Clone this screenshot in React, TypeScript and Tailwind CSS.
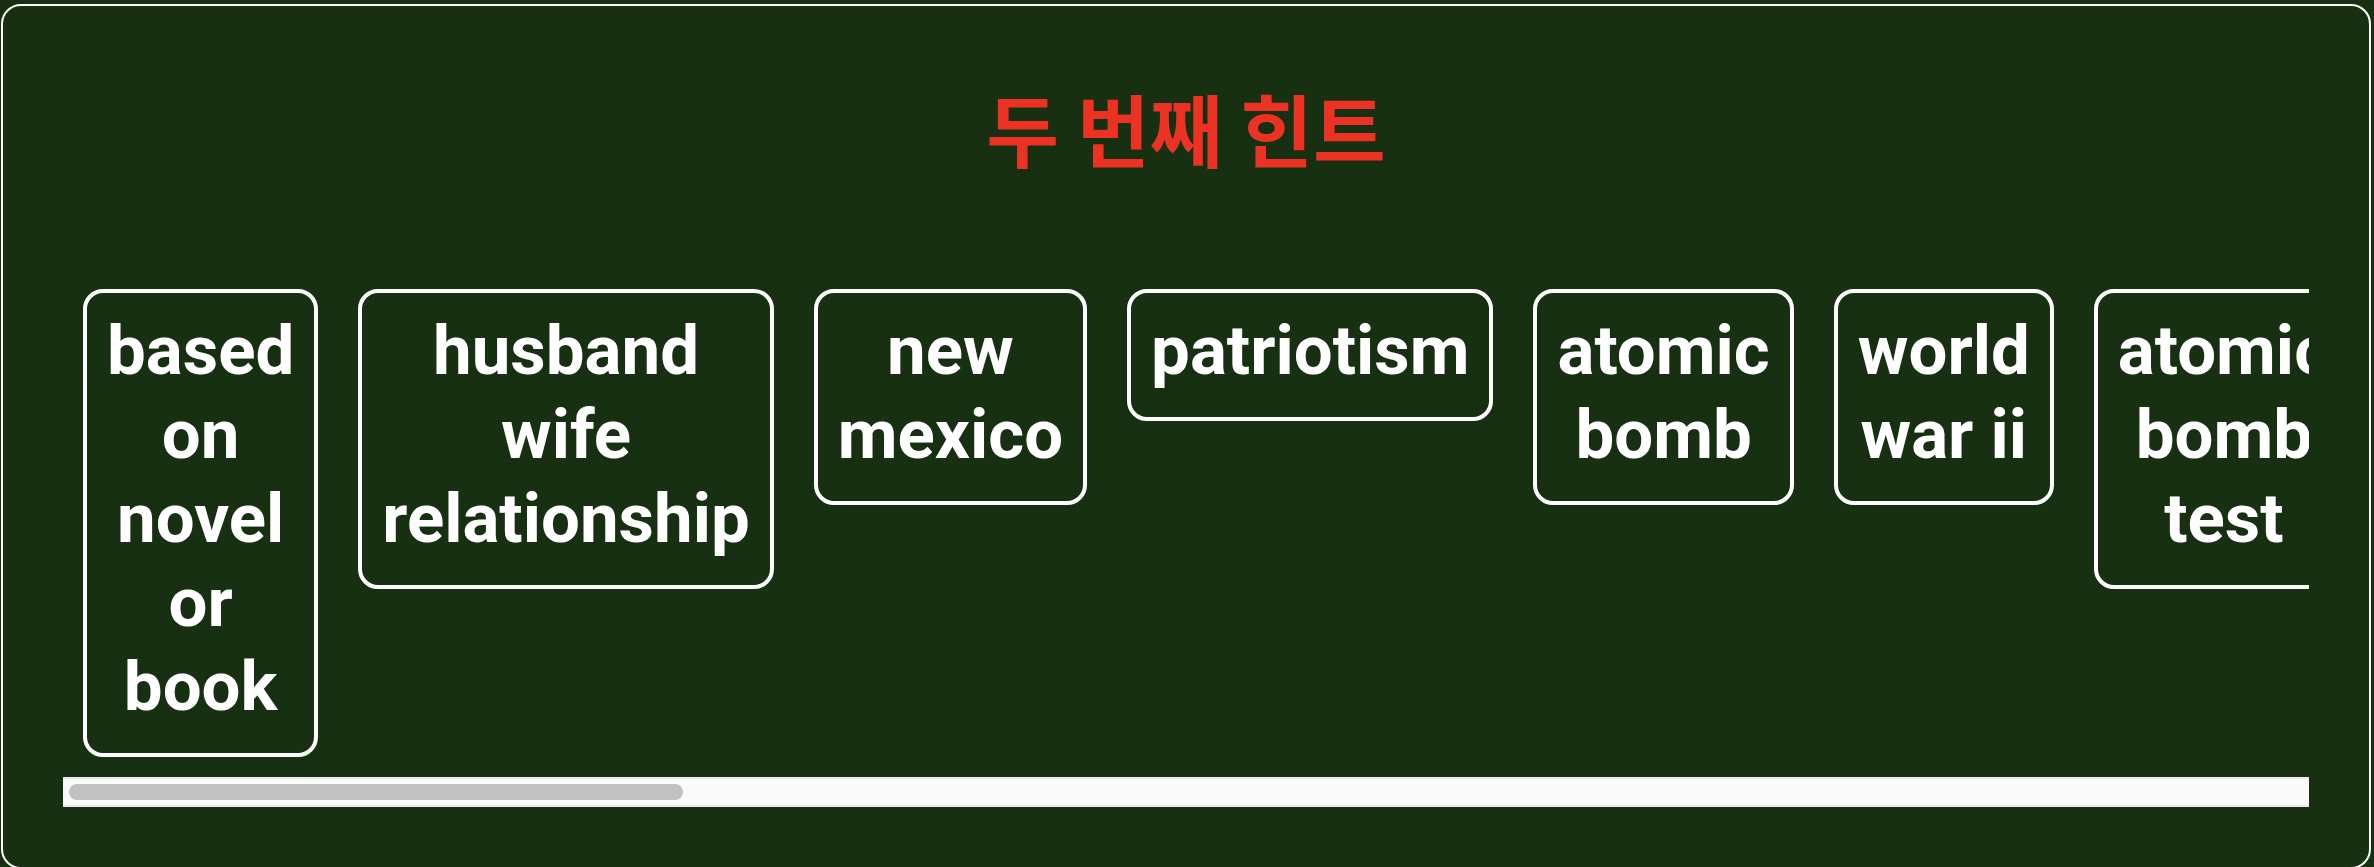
import { useRef, useState } from "react";

const hints: string[][] = [
  ["based", "on", "novel", "or", "book"],
  ["husband", "wife", "relationship"],
  ["new", "mexico"],
  ["patriotism"],
  ["atomic", "bomb"],
  ["world", "war ii"],
  ["atomic", "bomb", "test"],
];

function HintCard({ lines }: { lines: string[] }) {
  return (
    <li className="shrink-0 rounded-[20px] border-4 border-white px-5 pt-4 pb-6 text-center text-[69px] leading-[84px] font-bold whitespace-nowrap text-white">
      {lines.map((line) => (
        <span key={line} className="block">
          {line}
        </span>
      ))}
    </li>
  );
}

export default function App() {
  const list = useRef<HTMLUListElement>(null);
  const [progress, setProgress] = useState(0);

  const onScroll = () => {
    const el = list.current;
    if (!el) return;
    const range = el.scrollWidth - el.clientWidth;
    setProgress(range > 0 ? el.scrollLeft / range : 0);
  };

  return (
    <main className="h-screen overflow-hidden bg-[#183012] pt-1 pr-[3px] pl-px font-['Roboto','Noto_Sans_CJK_KR',sans-serif]">
      <section className="rounded-[20px] border-2 border-white p-[60px]">
        <h1 className="mb-[105px] pt-1.5 text-center font-['Noto_Sans_CJK_KR',sans-serif] text-[79px] leading-[112px] font-bold text-[#ec3323]">
          두 번째 힌트
        </h1>
        <ul
          ref={list}
          onScroll={onScroll}
          className="flex items-start gap-10 overflow-x-auto px-5 pb-5 [scrollbar-width:none]"
        >
          {hints.map((lines) => (
            <HintCard key={lines.join(" ")} lines={lines} />
          ))}
        </ul>
        <div aria-hidden="true" className="flex h-[30px] items-center border-y-2 border-[#ebebeb] bg-[#fafafa] px-1.5">
          <div style={{ flexGrow: progress }} />
          <div className="h-4 w-[27.5%] rounded-full bg-[#c1c1c1]" />
          <div style={{ flexGrow: 1 - progress }} />
        </div>
      </section>
    </main>
  );
}
